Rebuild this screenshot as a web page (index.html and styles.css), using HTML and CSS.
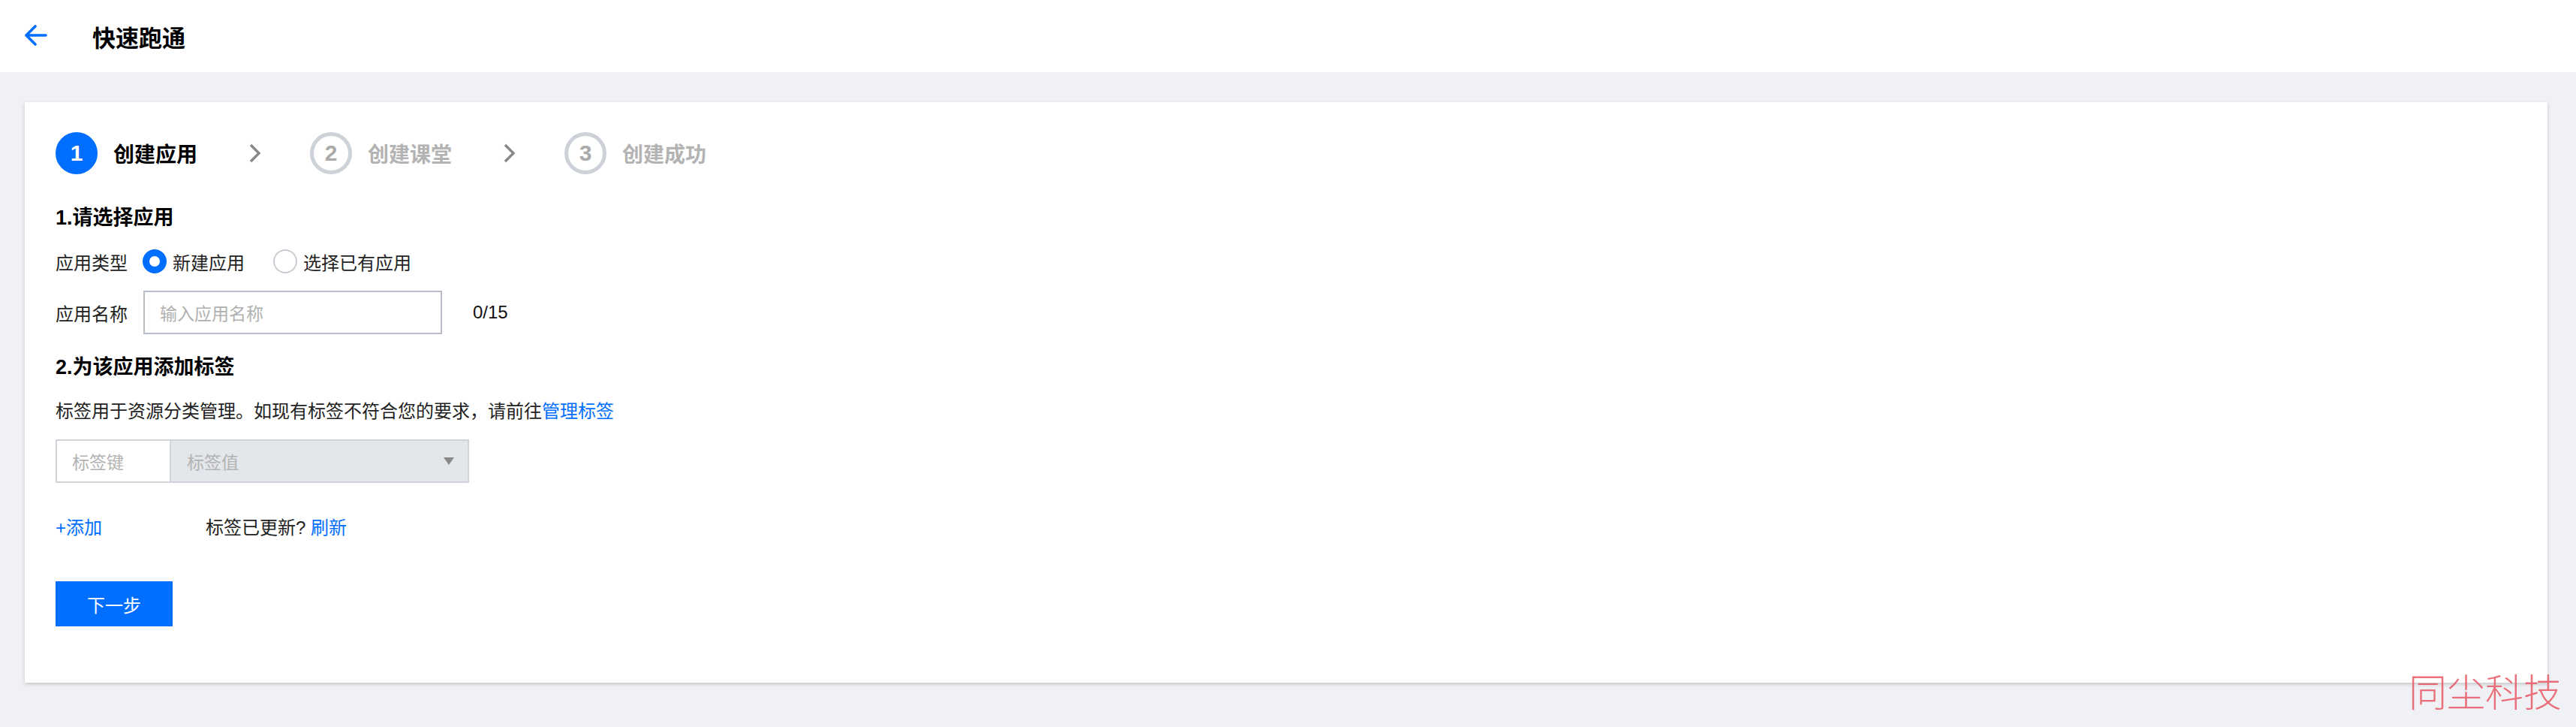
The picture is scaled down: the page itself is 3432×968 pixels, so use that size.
FILE: index.html
```html
<!DOCTYPE html>
<html lang="zh-CN">
<head>
  <meta charset="UTF-8">
  <meta name="viewport" content="width=device-width, initial-scale=1">
  <title>快速跑通</title>
  <link rel="stylesheet" href="styles.css">
</head>
<body>

  <header class="topbar">
    <a class="back" href="#">
      <svg width="30" height="28" viewBox="0 0 30 28">
        <polyline points="14,2 2,14 14,26" fill="none" stroke="#006eff" stroke-width="3.6" stroke-linecap="round" stroke-linejoin="round"/>
        <line x1="3" y1="14" x2="28" y2="14" stroke="#006eff" stroke-width="3.6" stroke-linecap="round"/>
      </svg>
    </a>
    <h1>快速跑通</h1>
  </header>

  <main class="card">
    <div class="steps">
      <div class="step active">
        <span class="num">1</span>
        <span class="step-name">创建应用</span>
      </div>
      <svg class="chev" width="16" height="26" viewBox="0 0 16 26">
        <polyline points="2,2 13,13 2,24" fill="none" stroke="#888" stroke-width="3.4"/>
      </svg>
      <div class="step">
        <span class="num">2</span>
        <span class="step-name">创建课堂</span>
      </div>
      <svg class="chev" width="16" height="26" viewBox="0 0 16 26">
        <polyline points="2,2 13,13 2,24" fill="none" stroke="#888" stroke-width="3.4"/>
      </svg>
      <div class="step">
        <span class="num">3</span>
        <span class="step-name">创建成功</span>
      </div>
    </div>

    <h2 class="sec-title first">1.请选择应用</h2>

    <div class="row radio-row">
      <span class="label">应用类型</span>
      <label class="radio checked"><span class="dot"></span>新建应用</label>
      <label class="radio"><span class="dot"></span>选择已有应用</label>
    </div>

    <div class="row input-row">
      <span class="label">应用名称</span>
      <div class="text-input">输入应用名称</div>
      <span class="counter">0/15</span>
    </div>

    <h2 class="sec-title second">2.为该应用添加标签</h2>

    <p class="desc">标签用于资源分类管理。如现有标签不符合您的要求，请前往<a href="#">管理标签</a></p>

    <div class="tag-row">
      <div class="tag-key">标签键</div>
      <div class="tag-value">
        <span>标签值</span>
        <span class="caret"></span>
      </div>
    </div>

    <div class="add-row">
      <a href="#" class="add">+添加</a>
      <span class="updated">标签已更新? <a href="#">刷新</a></span>
    </div>

    <button class="next">下一步</button>
  </main>

  <div class="watermark">同尘科技</div>

</body>
</html>
```

FILE: styles.css
```css
body {
  margin: 0;
  background: #f0f1f5;
  font-family: "Liberation Sans", "Noto Sans CJK SC", sans-serif;
  color: #222;
  min-height: 968px;
  position: relative;
}

a {
  color: #006eff;
  text-decoration: none;
}

.topbar {
  height: 96px;
  background: #fff;
  display: flex;
  align-items: center;
  padding-left: 33px;
}

.back {
  display: flex;
  width: 30px;
  margin-top: -2px;
}

.topbar h1 {
  margin: 0 0 0 60px;
  font-size: 31px;
  font-weight: 700;
  color: #000;
}

.card {
  margin: 40px 38px 0 33px;
  background: #fff;
  box-shadow: 0 2px 5px rgba(0, 0, 0, 0.18);
  padding: 40px 41px 75px;
  display: flex;
  flex-direction: column;
  align-items: flex-start;
}

/* steps */
.steps {
  display: flex;
  align-items: center;
  height: 56px;
}

.step {
  display: flex;
  align-items: center;
}

.num {
  box-sizing: border-box;
  width: 56px;
  height: 56px;
  border-radius: 50%;
  border: 5px solid #cdd2d9;
  color: #aaa;
  font-size: 30px;
  font-weight: 700;
  display: flex;
  align-items: center;
  justify-content: center;
}

.step-name {
  margin-left: 21px;
  font-size: 28px;
  font-weight: 600;
  color: #b3b3b3;
}

.step.active .num {
  background: #006eff;
  border-color: #006eff;
  color: #fff;
}

.step.active .step-name {
  color: #000;
  font-weight: 700;
}

.chev {
  margin: 0 65px 0 69px;
}

/* form */
.sec-title {
  margin: 0;
  font-size: 27px;
  line-height: 36px;
  font-weight: 700;
  color: #000;
}

.sec-title.first { margin-top: 40px; }
.sec-title.second { margin-top: 26px; }

.row {
  display: flex;
  align-items: center;
  font-size: 24px;
}

.radio-row {
  margin-top: 20px;
  height: 40px;
}

.label {
  margin-right: 20px;
}

.radio {
  display: flex;
  align-items: center;
  margin-right: 38px;
}

.dot {
  box-sizing: border-box;
  width: 32px;
  height: 32px;
  border-radius: 50%;
  border: 2px solid #c8cdd5;
  background: #fff;
  margin-right: 8px;
}

.radio.checked .dot {
  border: 9px solid #006eff;
}

.input-row {
  margin-top: 19px;
}

.input-row .label {
  margin-right: 21px;
}

.text-input {
  box-sizing: border-box;
  width: 398px;
  height: 58px;
  border: 2px solid #b7bec8;
  padding-left: 20px;
  display: flex;
  align-items: center;
  font-size: 23px;
  color: #b0b0b0;
}

.counter {
  margin-left: 41px;
  font-size: 24px;
  color: #111;
}

.desc {
  margin: 23px 0 0;
  font-size: 24px;
  line-height: 36px;
}

.tag-row {
  margin-top: 19px;
  display: flex;
  height: 58px;
  font-size: 23px;
  color: #b3b3b3;
}

.tag-key {
  box-sizing: border-box;
  width: 152px;
  border: 2px solid #cfd3da;
  border-right: 0;
  padding-left: 20px;
  display: flex;
  align-items: center;
  background: #fff;
}

.tag-value {
  box-sizing: border-box;
  width: 399px;
  border: 2px solid #cfd3da;
  background: #e3e6eb;
  padding: 0 18px 0 21px;
  display: flex;
  align-items: center;
  justify-content: space-between;
}

.caret {
  width: 0;
  height: 0;
  border-left: 7px solid transparent;
  border-right: 7px solid transparent;
  border-top: 10px solid #888;
}

.add-row {
  margin-top: 42px;
  display: flex;
  align-items: center;
  font-size: 24px;
  line-height: 36px;
}

.updated {
  margin-left: 138px;
  color: #222;
}

.next {
  margin-top: 53px;
  width: 156px;
  height: 60px;
  border: 0;
  background: #006eff;
  color: #fff;
  font-family: inherit;
  font-size: 24px;
  cursor: pointer;
}

.watermark {
  position: absolute;
  right: 19px;
  bottom: 12px;
  font-size: 51px;
  font-weight: 300;
  color: rgba(232, 88, 100, 0.85);
  font-family: "Noto Sans CJK SC", serif;
}
```
